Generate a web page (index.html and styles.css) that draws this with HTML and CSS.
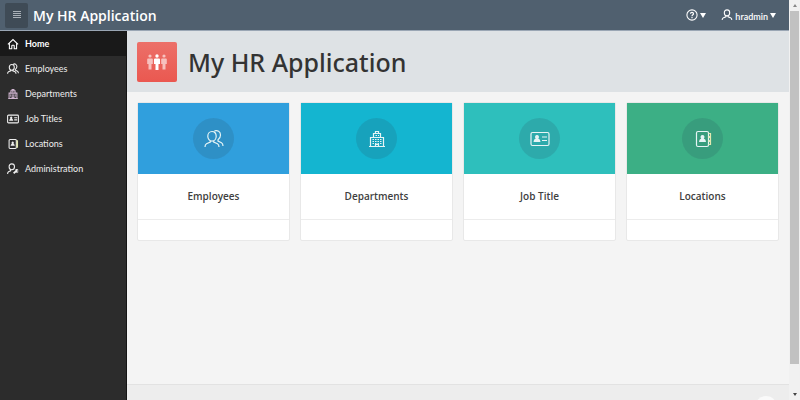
FILE: index.html
```html
<!DOCTYPE html>
<html lang="en">
<head>
<meta charset="utf-8">
<meta name="viewport" content="width=device-width, initial-scale=1">
<title>My HR Application</title>
<link rel="stylesheet" href="styles.css">
</head>
<body>
<svg class="sprite" aria-hidden="true">
  <symbol id="users" viewBox="0 0 20 20"><path d="M8 2.500c2.500 0 4.200 2 4.200 4.700s-1.700 5-4.200 5-4.200-2.300-4.200-5 1.700-4.700 4.200-4.700zM6.300 11.700v1.300l-3.800 1.700Q1 15.500 1 18M9.700 11.700v1.300l3.800 1.700Q15 15.500 15 18M10.500 1.900c3-1.200 6 .8 6 4.100 0 2-1 3.700-2.500 4.700v1.300l3.500 1.700q1.500.800 1.500 3.300"/></symbol>
  <symbol id="building" viewBox="0 0 20 20"><path d="M2 17.500h16M3.500 17.500V8.500h13v9M6.500 8.500v-4h7v4M8.500 4.500v-2h3v2M8.500 17.500v-2h3v2"/><path stroke-dasharray="1.500 1" d="M5.500 10.500h9.500M5.500 12.500h9.500M5.500 14.500h9.500M8.500 6.500h3.500"/></symbol>
  <symbol id="card" viewBox="0 0 20 20"><rect x="1" y="3.500" width="18" height="13" rx="1.500"/><path d="M12 8h5M12 11.500h5"/><path class="solid" d="M7 6a2 2 0 0 1 1.300 3.500q2.200.500 2.200 3.500h-7q0-3 2.200-3.500A2 2 0 0 1 7 6z"/></symbol>
  <symbol id="book" viewBox="0 0 20 20"><rect x="3.500" y="2.500" width="12" height="15" rx="1.500"/><path class="tabs" d="M15.500 4.500h2v3h-2M15.500 8.500h2v3h-2M15.500 12.500h2v3h-2"/><path class="solid" d="M9.500 6a2 2 0 0 1 1.300 3.500q2.200.500 2.200 3.500h-7q0-3 2.200-3.500A2 2 0 0 1 9.500 6z"/></symbol>
  <symbol id="home" viewBox="0 0 20 20"><path d="M1.500 10.500 10 2.500l8.500 8M4 9v9h4v-5q0-1 1-1h2q1 0 1 1v5h4V9"/></symbol>
  <symbol id="user" viewBox="0 0 20 20"><path d="M10 1.500c2.700 0 4.500 2 4.500 4.800s-1.800 5.200-4.500 5.200-4.500-2.400-4.500-5.200S7.300 1.500 10 1.500zM8 11.300v1.700l-4.500 1.800Q2 15.500 2 18.500M12 11.300v1.700l4.500 1.800q1.500.700 1.500 3.700"/></symbol>
  <symbol id="user-wrench" viewBox="0 0 20 20"><path d="M8 1.500c2.700 0 4.500 2 4.500 4.800s-1.800 5-4.500 5-4.500-2.200-4.500-5S5.300 1.500 8 1.500zM6 11v2l-3.500 1.500Q1 15.500 1 18.500"/><path class="wrench" d="m11 17 5-4"/><path class="solid" d="M14 10.500q3-1.500 5.500 1.500l-2.500.500v1.500l2.500.500q-2 2.500-5 1z"/></symbol>
  <symbol id="help" viewBox="0 0 20 20"><circle cx="10" cy="10" r="8.500"/><path class="mark" d="M7.500 8Q7.500 5.500 10 5.500T12.500 8q0 1-1.500 2-1 .700-1 2M10 13.500v2"/></symbol>
</svg>

<div class="app">
  <header class="topbar">
    <button class="toggle" type="button" aria-label="Toggle navigation">
      <svg viewBox="0 0 8 8"><path d="M0 .5h8M0 2.500h8M0 4.500h8M0 6.500h8"/></svg>
    </button>
    <a class="brand" href="#">My HR Application</a>
    <div class="actions">
      <button class="action" type="button" aria-label="Help"><svg class="icon"><use href="#help"/></svg><span class="caret"></span></button>
      <button class="action" type="button"><svg class="icon"><use href="#user"/></svg><span class="username">hradmin</span><span class="caret"></span></button>
    </div>
  </header>
  <div class="body">
    <nav class="sidebar">
      <a class="current" href="#"><svg class="icon"><use href="#home"/></svg>Home</a>
      <a href="#"><svg class="icon"><use href="#users"/></svg>Employees</a>
      <a href="#"><svg class="icon tinted"><use href="#building"/></svg>Departments</a>
      <a href="#"><svg class="icon"><use href="#card"/></svg>Job Titles</a>
      <a href="#"><svg class="icon"><use href="#book"/></svg>Locations</a>
      <a href="#"><svg class="icon"><use href="#user-wrench"/></svg>Administration</a>
    </nav>
    <main class="content">
      <section class="hero">
        <div class="logo">
          <svg viewBox="0 0 20 16">
            <g class="side"><circle cx="3" cy="2" r="1.600"/><path d="M1 4.500h4q.8 0 .8.800V10H4.500v5.500h-3V10H.2V5.300q0-.8.800-.8z"/><circle cx="17" cy="2" r="1.600"/><path d="M15 4.500h4q.8 0 .8.800V10h-1.300v5.500h-3V10h-1.300V5.300q0-.8.800-.8z"/></g>
            <circle cx="10" cy="2" r="1.700"/><path d="M8 4.500h4q1 0 1 1V10h-1.500v6h-3v-6H7V5.500q0-1 1-1z"/>
          </svg>
        </div>
        <h1>My HR Application</h1>
      </section>
      <section class="cards">
        <a class="card blue" href="#"><span class="banner"><span class="disc"><svg><use href="#users"/></svg></span></span><span class="title">Employees</span><span class="foot"></span></a>
        <a class="card cyan" href="#"><span class="banner"><span class="disc"><svg><use href="#building"/></svg></span></span><span class="title">Departments</span><span class="foot"></span></a>
        <a class="card teal" href="#"><span class="banner"><span class="disc"><svg><use href="#card"/></svg></span></span><span class="title">Job Title</span><span class="foot"></span></a>
        <a class="card green" href="#"><span class="banner"><span class="disc"><svg><use href="#book"/></svg></span></span><span class="title">Locations</span><span class="foot"></span></a>
      </section>
      <footer class="footer"><button class="to-top" type="button" aria-label="Back to top"></button></footer>
    </main>
  </div>
</div>
<div class="scrollbar" aria-hidden="true"><span class="arrow up"></span><span class="thumb"></span><span class="arrow down"></span></div>
</body>
</html>
```
FILE: styles.css
```css
* { box-sizing: border-box; }

body {
  margin: 0;
  height: 100vh;
  display: flex;
  overflow: hidden;
  background: #f4f4f4;
  color: #333;
  font-family: "Noto Sans", "Open Sans", sans-serif;
  font-size: 9px;
}

a { color: inherit; text-decoration: none; }
button { border: 0; padding: 0; background: none; color: inherit; font: inherit; }
svg { fill: none; stroke: currentColor; stroke-width: 1.200; }
.sprite { position: absolute; width: 0; height: 0; }
.solid { fill: currentColor; stroke: none; }
.wrench { stroke-width: 3; }
.mark { stroke-width: 2; }
.icon { width: 12px; height: 12px; flex: none; stroke-width: 1.800; }

.app { flex: 1; min-width: 0; display: flex; flex-direction: column; }

.topbar {
  display: flex;
  align-items: center;
  height: 31px;
  padding: 0 13px 0 5px;
  background: #50606f;
  border-bottom: 1px solid #9aa6b4;
  color: #fff;
}
.toggle {
  display: flex;
  align-items: center;
  justify-content: center;
  width: 23px;
  height: 25px;
  border-radius: 2px;
  background: #3f4b56;
  color: #a9b0b7;
}
.toggle svg { width: 8px; height: 8px; stroke-width: 1; }
.brand { margin-left: 5px; font-family: "Open Sans", sans-serif; font-size: 14px; font-weight: 600; }
.actions { display: flex; gap: 15px; margin-left: auto; }
.action { display: flex; align-items: center; gap: 2px; font-family: Lato, sans-serif; font-weight: 600; }
.username { padding-top: 2px; }
.caret { border: 3px solid transparent; border-top: 5px solid #fff; border-bottom: 0; }

.body { flex: 1; min-height: 0; display: flex; }

.sidebar {
  flex: none;
  width: 127px;
  background: #2c2c2c;
  border-right: 1px solid #151515;
  color: #eee;
  font-family: Lato, sans-serif;
}
.sidebar a {
  display: flex;
  align-items: center;
  gap: 6px;
  height: 25px;
  padding-left: 7px;
}
.sidebar .current { background: #191919; color: #fff; font-weight: 700; }
.tinted { color: #cfb4cf; }

.content { flex: 1; min-width: 0; display: flex; flex-direction: column; }

.hero {
  display: flex;
  align-items: center;
  gap: 11px;
  height: 61px;
  padding: 0 10px;
  background: #dee2e5;
}
.logo {
  display: flex;
  align-items: center;
  justify-content: center;
  width: 40px;
  height: 40px;
  border-radius: 2px;
  background: linear-gradient(#ec7069, #ea5850);
  color: #fff;
}
.logo svg { width: 20px; height: 16px; fill: currentColor; stroke: none; }
.side { opacity: .6; }
h1 { margin: 0; font-size: 25px; font-weight: 500; line-height: 40px; }

.cards {
  display: grid;
  grid-template-columns: repeat(4, 1fr);
  gap: 10px;
  padding: 10px;
}
.card {
  display: flex;
  flex-direction: column;
  border: 1px solid #e8e8e8;
  border-radius: 2px;
  background: #fff;
}
.banner {
  display: flex;
  align-items: center;
  justify-content: center;
  height: 71px;
}
.disc {
  display: flex;
  align-items: center;
  justify-content: center;
  width: 41px;
  height: 41px;
  border-radius: 50%;
  background: rgba(40, 70, 90, .17);
  color: #e6f4f5;
}
.disc svg { width: 20px; height: 20px; }
.blue .banner { background: #309fdd; }
.cyan .banner { background: #14b5d0; }
.teal .banner { background: #2ebfbc; }
.green .banner { background: #3caf85; }
.tabs { stroke: #e3e8b0; }
.title {
  padding: 14px 10px;
  border-bottom: 1px solid #ececec;
  color: #404040;
  font-family: "Open Sans", sans-serif;
  font-size: 10px;
  font-weight: 600;
  line-height: 17px;
  text-align: center;
}
.foot { height: 20px; }

.footer {
  display: flex;
  justify-content: flex-end;
  height: 16px;
  margin-top: auto;
  padding: 11px 12px 0;
  background: #ededed;
  border-top: 1px solid #e2e2e2;
  overflow: hidden;
}
.to-top { flex: none; width: 22px; height: 22px; border-radius: 50%; background: #fafafa; }

.scrollbar {
  flex: none;
  display: flex;
  flex-direction: column;
  align-items: center;
  width: 11px;
  padding: 4px 0;
  background: #f1f1f1;
}
.thumb { flex: 1; width: 9px; margin: 4px 0 29px; background: #c1c1c1; }
.arrow { border: 2px solid transparent; }
.up { border-top: 0; border-bottom: 3px solid #888; }
.down { border-bottom: 0; border-top: 3px solid #444; }
```
